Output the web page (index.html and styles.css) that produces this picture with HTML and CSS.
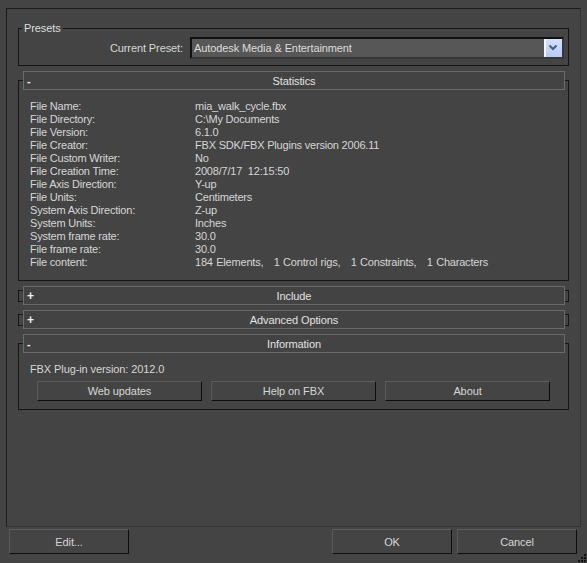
FILE: index.html
```html
<!DOCTYPE html>
<html>
<head>
<meta charset="utf-8">
<link rel="stylesheet" href="styles.css">
</head>
<body>
<div class="panel">
  <fieldset class="presets">
    <legend>Presets</legend>
    <div class="preset-row">
      <span class="preset-label">Current Preset:</span>
      <div class="combo">
        <span class="combo-text">Autodesk Media &amp; Entertainment</span>
        <span class="combo-btn"><svg width="18" height="18" viewBox="0 0 18 18"><polyline points="5.5,6.5 9,10 12.5,6.5" fill="none" stroke="#4a5c82" stroke-width="2"/></svg></span>
      </div>
    </div>
  </fieldset>

  <div class="rollout">
    <div class="rhead"><span class="sign">-</span><span class="rtitle">Statistics</span><span></span></div>
    <div class="rbody">
      <div class="stats">
        <span>File Name:</span><span class="val">mia_walk_cycle.fbx</span>
        <span>File Directory:</span><span class="val">C:\My Documents</span>
        <span>File Version:</span><span class="val">6.1.0</span>
        <span>File Creator:</span><span class="val">FBX SDK/FBX Plugins version 2006.11</span>
        <span>File Custom Writer:</span><span class="val">No</span>
        <span>File Creation Time:</span><span class="val">2008/7/17  12:15:50</span>
        <span>File Axis Direction:</span><span class="val">Y-up</span>
        <span>File Units:</span><span class="val">Centimeters</span>
        <span>System Axis Direction:</span><span class="val">Z-up</span>
        <span>System Units:</span><span class="val">Inches</span>
        <span>System frame rate:</span><span class="val">30.0</span>
        <span>File frame rate:</span><span class="val">30.0</span>
        <span>File content:</span><span class="val wide">184 Elements,   1 Control rigs,   1 Constraints,   1 Characters</span>
      </div>
    </div>
  </div>

  <div class="rollout collapsed">
    <div class="rhead"><span class="sign plus">+</span><span class="rtitle">Include</span><span></span></div>
    <div class="rbody"></div>
  </div>

  <div class="rollout collapsed">
    <div class="rhead"><span class="sign plus">+</span><span class="rtitle">Advanced Options</span><span></span></div>
    <div class="rbody"></div>
  </div>

  <div class="rollout info">
    <div class="rhead"><span class="sign">-</span><span class="rtitle">Information</span><span></span></div>
    <div class="rbody">
      <div class="version">FBX Plug-in version: 2012.0</div>
      <div class="info-buttons">
        <button class="btn small">Web updates</button>
        <button class="btn small">Help on FBX</button>
        <button class="btn small">About</button>
      </div>
    </div>
  </div>
</div>

<div class="footer">
  <button class="btn big edit">Edit...</button>
  <button class="btn big">OK</button>
  <button class="btn big">Cancel</button>
</div>

<svg class="grip" width="10" height="10" viewBox="0 0 10 10">
  <rect x="7" y="1" width="2" height="2" fill="#111"/>
  <rect x="4" y="4" width="2" height="2" fill="#111"/>
  <rect x="7" y="4" width="2" height="2" fill="#111"/>
  <rect x="1" y="7" width="2" height="2" fill="#111"/>
  <rect x="4" y="7" width="2" height="2" fill="#111"/>
  <rect x="7" y="7" width="2" height="2" fill="#111"/>
</svg>
</body>
</html>
```

FILE: styles.css
```css
html, body {
  margin: 0;
  padding: 0;
  background: #444444;
}
body {
  width: 587px;
  height: 563px;
  overflow: hidden;
  position: relative;
  font-family: "Liberation Sans", Arial, sans-serif;
  font-size: 11px;
  line-height: 13px;
  letter-spacing: -0.1px;
  color: #d6d6d6;
}
.panel {
  margin: 8px 0 0 6px;
  width: 575px;
  height: 519px;
  box-sizing: border-box;
  border-style: solid;
  border-width: 1px;
  border-color: #1c1c1c #343434 #343434 #1c1c1c;
}
.presets {
  margin: 13px 0 0 11px;
  width: 551px;
  box-sizing: border-box;
  border: 1px solid #151515;
  padding: 2px 4px 6px 0;
  min-width: 0;
}
.presets legend {
  margin-left: 3px;
  padding: 0 2px;
  line-height: 13px;
  color: #dedede;
}
.preset-row {
  display: flex;
  justify-content: flex-end;
  align-items: center;
  gap: 7px;
  height: 22px;
}
.combo {
  width: 374px;
  height: 22px;
  box-sizing: border-box;
  border-style: solid;
  border-width: 2px;
  border-color: #121212 #383838 #383838 #121212;
  background: #575757;
  display: flex;
}
.combo-text {
  flex: 1;
  padding-left: 2px;
  line-height: 18px;
  color: #dcdcdc;
}
.combo-btn {
  width: 18px;
  height: 18px;
  box-sizing: border-box;
  border-left: 2px solid #f4f7ff;
  background: linear-gradient(#d4e0fe, #b8cbf7);
  display: flex;
  align-items: center;
  justify-content: center;
}
.combo-btn svg {
  display: block;
  margin-left: -2px;
}
.rollout {
  margin: 5px 0 0 11px;
  width: 551px;
}
.collapsed + .rollout {
  margin-top: 8px;
}
.rhead {
  position: relative;
  z-index: 1;
  height: 19px;
  box-sizing: border-box;
  margin: 0 4px 0 5px;
  border: 1px solid #6a6a6a;
  background: #434343;
  display: grid;
  grid-template-columns: 1fr auto 1fr;
  align-items: center;
  padding: 1px 3px 0;
  line-height: 16px;
  color: #e2e2e2;
}
.sign {
  justify-self: start;
  font-weight: bold;
  color: #f0f0f0;
}
.sign.plus {
  font-size: 12px;
}
.rbody {
  margin-top: -10px;
  border: 1px solid #161616;
  padding: 19px 0 11px 11px;
}
.collapsed .rbody {
  margin-top: -15px;
  height: 12px;
  box-sizing: border-box;
  padding: 0;
}
.stats {
  display: grid;
  grid-template-columns: 165px auto;
  line-height: 13px;
  letter-spacing: -0.2px;
}
.val {
  white-space: pre;
}
.val.wide {
  word-spacing: 0.6px;
}
.info .rbody {
  padding-bottom: 8px;
}
.version {
  line-height: 13px;
}
.info-buttons {
  display: flex;
  gap: 9px;
  padding-left: 7px;
  margin-top: 5px;
}
.btn {
  font-family: inherit;
  font-size: 11px;
  letter-spacing: -0.1px;
  color: #d6d6d6;
  background: #444444;
  border-style: solid;
  border-width: 1px;
  border-color: #5e5e5e #0e0e0e #0e0e0e #5a5a5a;
  padding: 0;
  margin: 0;
  box-sizing: border-box;
  text-align: center;
}
.btn.small {
  width: 165px;
  height: 20px;
}
.footer {
  margin-top: 2px;
  display: flex;
  gap: 5px;
  padding: 0 10px 0 9px;
}
.btn.big {
  width: 120px;
  height: 25px;
}
.btn.edit {
  margin-right: auto;
}
.grip {
  position: absolute;
  right: 0;
  bottom: 0;
}
```
